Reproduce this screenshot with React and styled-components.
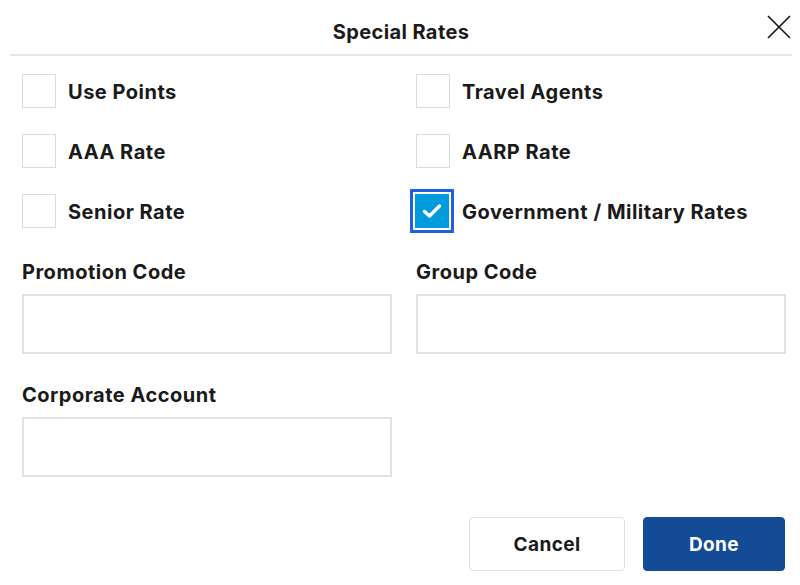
import React from "react";
import styled, { createGlobalStyle } from "styled-components";

const Global = createGlobalStyle`
  html, body { margin: 0; padding: 0; background: #fff; }
  body { font-family: Inter, "Liberation Sans", sans-serif; color: #1a1a1a; }
  * { box-sizing: border-box; }
`;

const Modal = styled.div`
  width: 800px;
  height: 585px;
  background: #fff;
  display: flex;
  flex-direction: column;
`;

const Header = styled.div`
  position: relative;
  margin: 0 8px 0 10px;
  height: 56px;
  border-bottom: 2px solid #e6e6e6;
  display: flex;
  align-items: center;
  justify-content: center;
`;

const Title = styled.h2`
  margin: 0;
  padding-top: 10px;
  font-size: 20px;
  font-weight: 700;
  letter-spacing: 0.4px;
  color: #1a1a1a;
`;

const CloseButton = styled.button`
  position: absolute;
  right: 0;
  top: 14px;
  width: 26px;
  height: 26px;
  padding: 0;
  border: none;
  background: none;
  display: flex;
  align-items: center;
  justify-content: center;
  cursor: pointer;
`;

const Body = styled.div`
  padding: 18px 15px 0 22px;
  display: flex;
  flex-direction: column;
`;

const Grid = styled.div`
  display: grid;
  grid-template-columns: 370px 370px;
  column-gap: 24px;
  row-gap: ${(p) => p.$rowGap || 0}px;
  margin-top: ${(p) => p.$top || 0}px;
`;

const CheckItem = styled.label`
  display: flex;
  align-items: center;
  gap: 12px;
  height: 34px;
  font-size: 20px;
  font-weight: 700;
  letter-spacing: 0.5px;
  cursor: pointer;
`;

const CheckText = styled.span`
  padding-top: 2px;
`;

const Box = styled.span`
  width: 34px;
  height: 34px;
  flex: none;
  border: 1px solid ${(p) => (p.$checked ? "#009bdc" : "#dcdcdc")};
  background: ${(p) => (p.$checked ? "#009bdc" : "#fff")};
  box-shadow: ${(p) =>
    p.$checked ? "0 0 0 2px #fff, 0 0 0 5px #1f5fe6" : "none"};
  display: flex;
  align-items: center;
  justify-content: center;
  margin-left: ${(p) => (p.$checked ? "-1px" : "0")};
  margin-right: ${(p) => (p.$checked ? "1px" : "0")};
`;

const Field = styled.div`
  display: flex;
  flex-direction: column;
`;

const FieldLabel = styled.label`
  font-size: 20px;
  font-weight: 700;
  letter-spacing: 0.5px;
  line-height: 24px;
  margin-bottom: 10px;
  padding-top: 2px;
`;

const Input = styled.input`
  width: 370px;
  height: 60px;
  border: 2px solid #e2e2e2;
  padding: 0 14px;
  font-size: 18px;
  font-family: inherit;
  outline: none;
`;

const Footer = styled.div`
  display: flex;
  justify-content: flex-end;
  gap: 18px;
  padding: 40px 15px 0 0;
`;

const Button = styled.button`
  height: 54px;
  width: ${(p) => p.$w}px;
  border-radius: 4px;
  font-family: inherit;
  font-size: 19px;
  font-weight: 700;
  letter-spacing: 0.4px;
  cursor: pointer;
  border: 1px solid ${(p) => (p.$primary ? "#134b97" : "#e1e1e8")};
  background: ${(p) => (p.$primary ? "#134b97" : "#fff")};
  color: ${(p) => (p.$primary ? "#fff" : "#1a1a1a")};
`;

const checks = [
  ["Use Points", false],
  ["Travel Agents", false],
  ["AAA Rate", false],
  ["AARP Rate", false],
  ["Senior Rate", false],
  ["Government / Military Rates", true],
];

export default function App() {
  return (
    <Modal>
      <Global />
      <Header>
        <Title>Special Rates</Title>
        <CloseButton aria-label="Close">
          <svg width="24" height="24" viewBox="0 0 24 24">
            <path d="M1 1L23 23M23 1L1 23" stroke="#1a1a1a" strokeWidth="1.7" />
          </svg>
        </CloseButton>
      </Header>
      <Body>
        <Grid $rowGap={26}>
          {checks.map(([label, checked]) => (
            <CheckItem key={label}>
              <Box $checked={checked}>
                {checked && (
                  <svg width="20" height="16" viewBox="0 0 20 16">
                    <path
                      d="M2.5 8.5L7.5 13L17.5 3"
                      fill="none"
                      stroke="#fff"
                      strokeWidth="3.5"
                      strokeLinecap="round"
                      strokeLinejoin="round"
                    />
                  </svg>
                )}
              </Box>
              <CheckText>{label}</CheckText>
            </CheckItem>
          ))}
        </Grid>
        <Grid $rowGap={27} $top={30}>
          <Field>
            <FieldLabel>Promotion Code</FieldLabel>
            <Input />
          </Field>
          <Field>
            <FieldLabel>Group Code</FieldLabel>
            <Input />
          </Field>
          <Field>
            <FieldLabel>Corporate Account</FieldLabel>
            <Input />
          </Field>
        </Grid>
      </Body>
      <Footer>
        <Button $w={156}>Cancel</Button>
        <Button $w={142} $primary>
          Done
        </Button>
      </Footer>
    </Modal>
  );
}
